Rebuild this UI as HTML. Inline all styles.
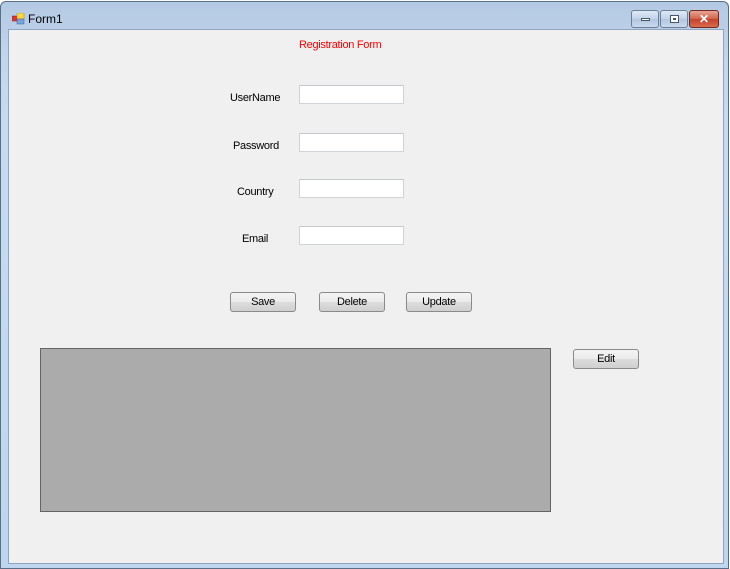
<!DOCTYPE html>
<html><head><style>
*{margin:0;padding:0;box-sizing:border-box}
body{width:730px;height:569px;overflow:hidden;background:#fff;font-family:"Liberation Sans",sans-serif;font-size:11px;letter-spacing:-0.3px}
.win{position:absolute;left:0;top:1px;width:729px;height:568px;border:1px solid #5a6e87;border-radius:6px 6px 0 0;background:linear-gradient(#b4c9e3 0,#c2d6ec 60px,#c6dbf0 120px,#bfd6ee 100%)}
.client{position:absolute;left:8px;top:28px;width:714px;height:533px;background:#f0f0f0;box-shadow:0 0 0 1px #8ea4bf}
.title{position:absolute;left:27px;top:10px;font-size:12px;color:#000;letter-spacing:0}
.icon{position:absolute;left:11px;top:11px}
.lbl{position:absolute;color:#000}
.tb{position:absolute;width:105px;height:19px;background:#fff;border:1px solid #d0d4da;border-top-color:#c4c8cd}
.btn{position:absolute;width:66px;height:20px;border:1px solid #8a8a8a;border-radius:3px;background:linear-gradient(#f4f4f4 0,#ebebeb 50%,#dddddd 51%,#cfcfcf 100%);text-align:center;line-height:18px;color:#000}
.grid{position:absolute;left:39px;top:346px;width:511px;height:164px;background:#ababab;border:1px solid #646464}
.cb{position:absolute;top:8px;height:18px;border:1px solid #6b7f99;border-radius:3px;background:linear-gradient(#dfe9f5,#c1d2e8 50%,#b3c6df 51%,#c9d9ee)}
</style></head><body>
<div class="win">
<svg class="icon" width="14" height="12"><rect x="0" y="3" width="5" height="5" fill="#d33" stroke="#822" stroke-width="0.5"/><rect x="5" y="0" width="7" height="6" fill="#f6d74a" stroke="#b08a10" stroke-width="0.5"/><rect x="5" y="6" width="7" height="5" fill="#7aa3d8" stroke="#3a62a0" stroke-width="0.5"/></svg>
<div class="title">Form1</div>
<div class="cb" style="left:630px;width:28px"><div style="position:absolute;left:9px;top:7px;width:9px;height:3px;background:#fff;border:1px solid #45556b"></div></div>
<div class="cb" style="left:659px;width:28px"><div style="position:absolute;left:9px;top:4px;width:9px;height:8px;border:1px solid #45556b;background:#fff"><div style="margin:2px;width:3px;height:2px;border:1px solid #45556b"></div></div></div>
<div class="cb" style="left:688px;width:30px;border-color:#6e2a22;background:linear-gradient(#e9a595,#d0614a 50%,#c2422a 51%,#d96a4e)"><div style="position:absolute;left:0;right:0;top:1px;text-align:center;color:#fff;font-weight:bold;font-size:12px;letter-spacing:0">✕</div></div>
<div class="client">
<div class="lbl" style="left:290px;top:9px;color:#ff0000">Registration Form</div>
<div class="lbl" style="left:221px;top:62px">UserName</div>
<div class="tb" style="left:290px;top:55px"></div>
<div class="lbl" style="left:224px;top:110px">Password</div>
<div class="tb" style="left:290px;top:103px"></div>
<div class="lbl" style="left:228px;top:156px">Country</div>
<div class="tb" style="left:290px;top:149px"></div>
<div class="lbl" style="left:233px;top:203px">Email</div>
<div class="tb" style="left:290px;top:196px"></div>
<div class="btn" style="left:221px;top:262px">Save</div>
<div class="btn" style="left:310px;top:262px">Delete</div>
<div class="btn" style="left:397px;top:262px">Update</div>
<div class="btn" style="left:564px;top:319px">Edit</div>
</div>
<div class="grid"></div>
</div>
</body></html>
